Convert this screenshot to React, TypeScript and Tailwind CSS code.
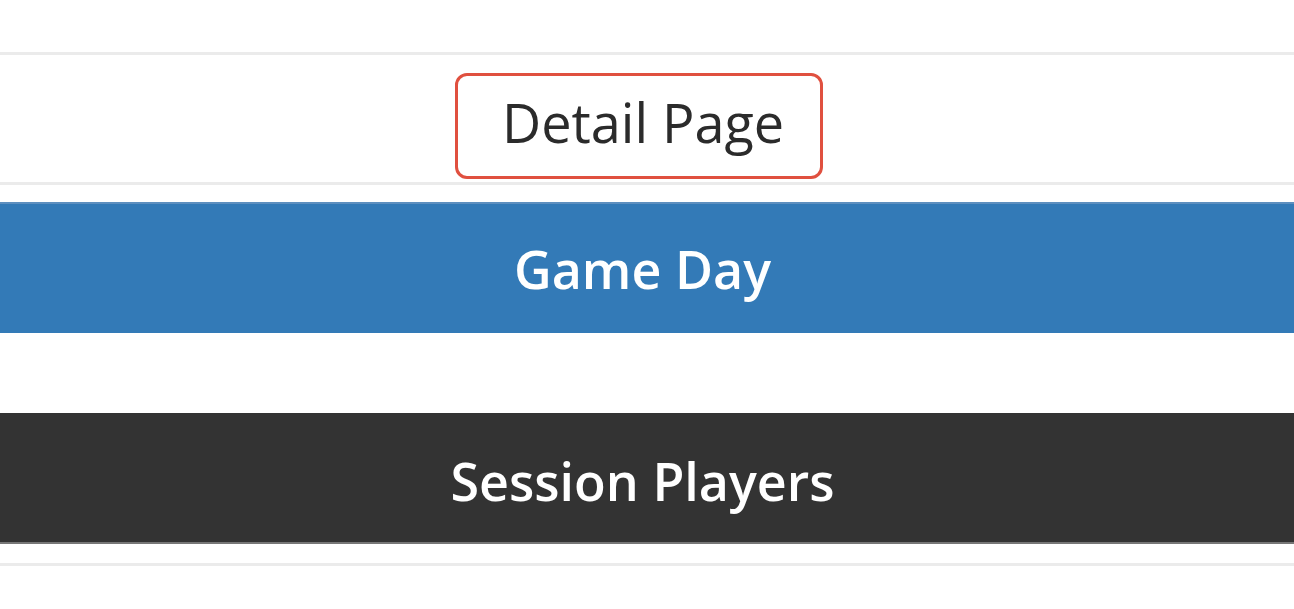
import React from 'react';

const App = () => {
  return (
    <div className="w-full h-[609px] bg-white overflow-hidden" style={{ fontFamily: '"Open Sans", "Noto Sans", sans-serif' }}>
      <div className="h-[52px]" />
      <div className="h-[3px] bg-[#ebebeb]" />
      <div className="h-[127px] flex justify-center pt-[18px] pr-[16px]">
        <div className="w-[368px] h-[106px] border-[3px] border-[#e0503f] rounded-[12px] flex items-center pl-[44px] pb-[8px] text-[#2b2b2b] text-[54px] font-medium leading-none">
          Detail Page
        </div>
      </div>
      <div className="h-[3px] bg-[#ebebeb]" />
      <div className="h-[17px]" />
      <div className="h-[131px] bg-[#337ab7] border-t-2 border-[#5d8fbf] flex items-center justify-center pr-[9px] text-white text-[52px] font-semibold leading-none">
        Game Day
      </div>
      <div className="h-[80px]" />
      <div className="h-[131px] bg-[#333] border-b-2 border-[#777] flex items-center justify-center pr-[9px] pt-[6px] text-white text-[52px] font-semibold leading-none">
        Session Players
      </div>
      <div className="h-[19px]" />
      <div className="h-[3px] bg-[#ebebeb]" />
    </div>
  );
};

export default App;
